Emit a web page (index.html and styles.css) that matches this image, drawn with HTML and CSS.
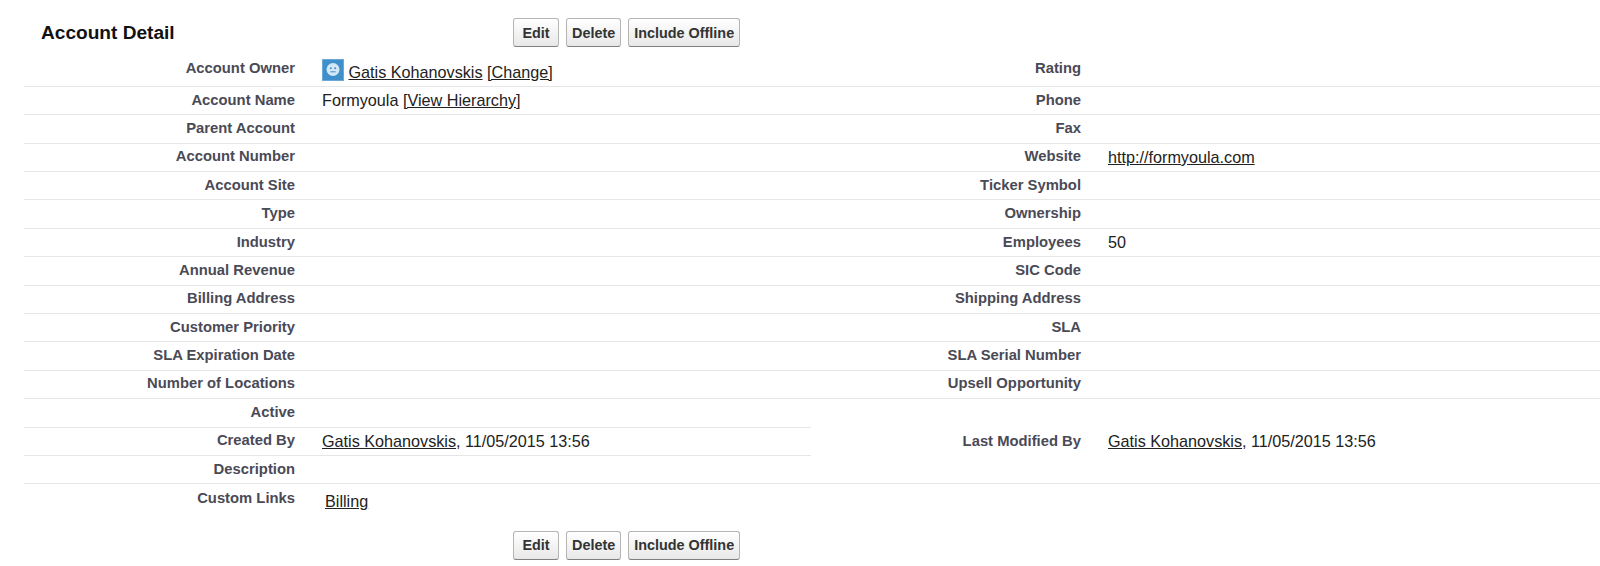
FILE: index.html
```html
<!DOCTYPE html>
<html lang="en">
<head>
    <meta charset="UTF-8">
    <title>Account Detail</title>
    <link rel="stylesheet" href="styles.css">
</head>
<body>
    <div class="detail">
        <div class="page-buttons top">
            <h2 class="title">Account Detail</h2>
            <div class="buttons">
                <button>Edit</button>
                <button>Delete</button>
                <button>Include Offline</button>
            </div>
        </div>
        <table class="fields">
            <tr class="first">
                <th>Account Owner</th>
                <td>
                    <svg class="avatar" width="22" height="22" viewBox="0 0 22 22">
                        <rect width="22" height="22" fill="#3f8fcb"/>
                        <rect x="0.5" y="0.5" width="21" height="21" fill="none" stroke="#6aa9d8"/>
                        <circle cx="11" cy="10.5" r="6.5" fill="#d3e8f6"/>
                        <circle cx="8.8" cy="9.2" r="1" fill="#3f8fcb"/>
                        <circle cx="13.2" cy="9.2" r="1" fill="#3f8fcb"/>
                        <path d="M8.4 12.8h5.2" stroke="#3f8fcb" stroke-width="1" fill="none"/>
                    </svg>
                    <a href="#">Gatis Kohanovskis</a> <a href="#">[Change]</a>
                </td>
                <th>Rating</th>
                <td></td>
            </tr>
            <tr>
                <th>Account Name</th>
                <td>Formyoula <a href="#">[View Hierarchy]</a></td>
                <th>Phone</th>
                <td></td>
            </tr>
            <tr>
                <th>Parent Account</th>
                <td></td>
                <th>Fax</th>
                <td></td>
            </tr>
            <tr>
                <th>Account Number</th>
                <td></td>
                <th>Website</th>
                <td><a href="#">http://formyoula.com</a></td>
            </tr>
            <tr>
                <th>Account Site</th>
                <td></td>
                <th>Ticker Symbol</th>
                <td></td>
            </tr>
            <tr>
                <th>Type</th>
                <td></td>
                <th>Ownership</th>
                <td></td>
            </tr>
            <tr>
                <th>Industry</th>
                <td></td>
                <th>Employees</th>
                <td>50</td>
            </tr>
            <tr>
                <th>Annual Revenue</th>
                <td></td>
                <th>SIC Code</th>
                <td></td>
            </tr>
            <tr>
                <th>Billing Address</th>
                <td></td>
                <th>Shipping Address</th>
                <td></td>
            </tr>
            <tr>
                <th>Customer Priority</th>
                <td></td>
                <th>SLA</th>
                <td></td>
            </tr>
            <tr>
                <th>SLA Expiration Date</th>
                <td></td>
                <th>SLA Serial Number</th>
                <td></td>
            </tr>
            <tr>
                <th>Number of Locations</th>
                <td></td>
                <th>Upsell Opportunity</th>
                <td></td>
            </tr>
            <tr>
                <th>Active</th>
                <td></td>
                <th class="span-label" rowspan="3">Last Modified By</th>
                <td class="span-value" rowspan="3"><a href="#">Gatis Kohanovskis</a>, 11/05/2015 13:56</td>
            </tr>
            <tr>
                <th>Created By</th>
                <td><a href="#">Gatis Kohanovskis</a>, 11/05/2015 13:56</td>
            </tr>
            <tr>
                <th>Description</th>
                <td></td>
            </tr>
            <tr class="last">
                <th>Custom Links</th>
                <td colspan="3"><a class="custom" href="#">Billing</a></td>
            </tr>
        </table>
        <div class="page-buttons bottom">
            <div class="buttons">
                <button>Edit</button>
                <button>Delete</button>
                <button>Include Offline</button>
            </div>
        </div>
    </div>
</body>
</html>
```

FILE: styles.css
```css
body {
    font-family: "Liberation Sans", Arial, sans-serif;
    background-color: #ffffff;
    margin: 0;
    overflow: hidden;
}
.detail {
    padding: 18px 0 0 24px;
}
.page-buttons {
    display: flex;
    align-items: center;
    height: 29px;
}
.title {
    width: 489px;
    margin: 0;
    padding-left: 17px;
    box-sizing: border-box;
    font-size: 19.1px;
    font-weight: bold;
    color: #111111;
}
.bottom {
    padding-left: 489px;
    margin-top: 13px;
}
.buttons {
    display: flex;
    gap: 7px;
}
button {
    min-width: 46px;
    height: 29px;
    padding: 0 5px;
    font-family: "Liberation Sans", Arial, sans-serif;
    font-size: 14.4px;
    font-weight: bold;
    color: #333333;
    background: linear-gradient(#ffffff, #e8e8e8);
    border: 1px solid #b5b5b5;
    border-bottom-color: #7f7f7f;
    border-radius: 3px;
}
.fields {
    width: 1576px;
    margin-top: 11px;
    border-collapse: collapse;
    table-layout: fixed;
    font-size: 16.2px;
}
.fields th {
    height: 28.4px;
    box-sizing: border-box;
    padding: 0 0 2px 0;
    text-align: right;
    font-size: 14.8px;
    font-weight: bold;
    color: #4a4a56;
    border-bottom: 1px solid #e6e6e6;
}
.fields td {
    box-sizing: border-box;
    padding: 0 0 0 27px;
    color: #222222;
    border-bottom: 1px solid #e6e6e6;
}
.fields th:nth-child(1) {
    width: 271px;
}
.fields td:nth-child(2) {
    width: 516px;
}
.fields th:nth-child(3) {
    width: 270px;
}
.fields .first th {
    vertical-align: top;
    padding-top: 2px;
}
.fields .first td {
    vertical-align: top;
    padding-top: 1px;
}
.fields .span-label {
    padding-bottom: 0;
}
.fields .last th,
.fields .last td {
    border-bottom: none;
}
.fields .last th {
    height: 34px;
    vertical-align: top;
    padding-top: 6px;
}
.fields .last td {
    padding-top: 1px;
}
.custom {
    margin-left: 3px;
}
.avatar {
    vertical-align: -3px;
}
a {
    color: #222222;
}
```
